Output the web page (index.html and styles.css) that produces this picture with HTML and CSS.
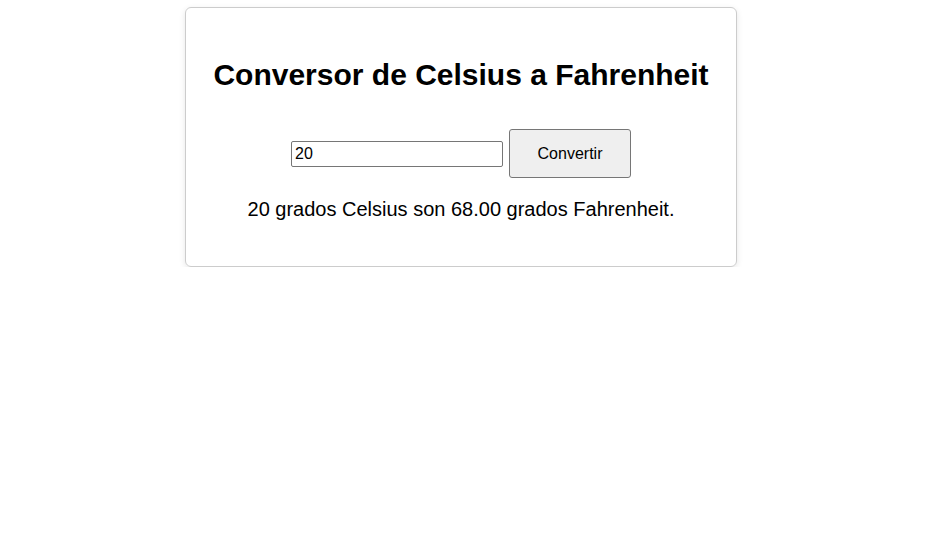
FILE: index.html
```html
<!DOCTYPE html>
<html lang="es">
<head>
<meta charset="utf-8">
<title>Conversor de Celsius a Fahrenheit</title>
<link rel="stylesheet" href="styles.css">
</head>
<body>
<div class="card">
  <h1 class="title">Conversor de Celsius a Fahrenheit</h1>
  <div class="form">
    <input class="field" type="number" value="20">
    <button class="btn">Convertir</button>
  </div>
  <p class="result">20 grados Celsius son 68.00 grados Fahrenheit.</p>
</div>
</body>
</html>
```
FILE: styles.css
```css
html, body {
  margin: 0;
  padding: 0;
  background: #fff;
  font-family: "Liberation Sans", Arial, sans-serif;
  color: #000;
}
.card {
  box-sizing: border-box;
  width: 552px;
  height: 260px;
  margin: 7px 0 0 185px;
  border: 1px solid #cccccc;
  border-radius: 6px;
  box-shadow: 0 2px 6px rgba(0,0,0,0.1);
  padding: 40px 20px 20px;
  text-align: center;
}
.title {
  margin: 0;
  font-size: 30px;
  font-weight: bold;
  line-height: 54px;
}
.form {
  display: flex;
  justify-content: center;
  align-items: center;
  gap: 6px;
  margin-top: 27px;
}
.field {
  box-sizing: border-box;
  width: 212px;
  height: 26px;
  margin: 0;
  padding: 1px 3px;
  font-family: "Liberation Sans", Arial, sans-serif;
  font-size: 16px;
  border: 1px solid #767676;
  border-radius: 2px;
  -moz-appearance: textfield;
  appearance: textfield;
}
.field::-webkit-inner-spin-button,
.field::-webkit-outer-spin-button {
  -webkit-appearance: none;
  margin: 0;
}
.btn {
  box-sizing: border-box;
  width: 122px;
  height: 49px;
  margin: 0;
  padding: 0;
  font-family: "Liberation Sans", Arial, sans-serif;
  font-size: 16px;
  color: #000;
  background: #efefef;
  border: 1px solid #767676;
  border-radius: 3px;
}
.result {
  margin: 19px 0 0;
  font-size: 20px;
  line-height: 24px;
}
```
